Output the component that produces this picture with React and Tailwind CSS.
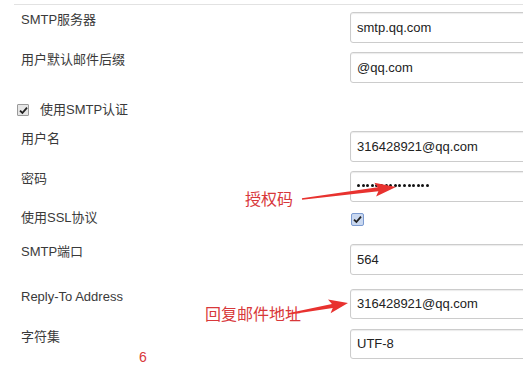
import React from "react";

const Check = ({ blue }) => (
  <span
    className={
      blue
        ? "flex h-[13px] w-[13px] items-center justify-center rounded-[2px] border border-[#7b9ad0] bg-[#c9d8f0]"
        : "flex h-[12px] w-[12px] items-center justify-center rounded-[1px] border border-[#9a9a9a] bg-[#e6e6e6]"
    }
  >
    <svg width="9" height="9" viewBox="0 0 9 9">
      <path d="M1 4.6 L3.4 7 L8 1.6" fill="none" stroke="#222" strokeWidth="1.8" />
    </svg>
  </span>
);

const Field = ({ children, h = "h-[31px]" }) => (
  <div
    className={`flex ${h} w-[200px] shrink-0 items-center rounded-[3px] border border-[#cccccc] bg-white px-[6px] text-[13px] text-[#222] shadow-[inset_0_1px_1px_rgba(0,0,0,0.08)]`}
  >
    {children}
  </div>
);

const Row = ({ label, children, className = "" }) => (
  <div className={`flex items-start ${className}`}>
    <div className="w-[350px] shrink-0 pl-[21px] leading-[16px]">{label}</div>
    {children}
  </div>
);

const dots = Array.from({ length: 16 });

export default function App() {
  return (
    <div className="relative h-[369px] w-[523px] overflow-hidden bg-white font-['Arial','Liberation_Sans','Noto_Sans_CJK_SC',sans-serif] text-[13px] text-[#3a3a3a]">
      <div className="ml-[14px] mt-[4px] border-t border-[#e2e2e2]" />

      <Row label="SMTP服务器" className="mt-[7px]">
        <Field>smtp.qq.com</Field>
      </Row>
      <Row label="用户默认邮件后缀" className="mt-[9px]">
        <Field>@qq.com</Field>
      </Row>

      <div className="mt-[19px] flex h-[16px] items-center pl-[17px]">
        <Check />
        <span className="ml-[11px] leading-[16px]">使用SMTP认证</span>
      </div>

      <Row label="用户名" className="mt-[13px]">
        <Field>316428921@qq.com</Field>
      </Row>
      <Row label="密码" className="mt-[9px]">
        <Field>
          <span className="mt-[-2px] flex gap-[1.6px]">
            {dots.map((_, i) => (
              <span key={i} className="h-[3px] w-[3px] rounded-full bg-[#111]" />
            ))}
          </span>
        </Field>
      </Row>
      <Row label="使用SSL协议" className="mt-[8px] h-[18px]">
        <div className="ml-[1px] mt-[3px]">
          <Check blue />
        </div>
      </Row>
      <Row label="SMTP端口" className="mt-[16px]">
        <Field>564</Field>
      </Row>
      <Row label="Reply-To Address" className="mt-[14px]">
        <Field h="h-[30px]">316428921@qq.com</Field>
      </Row>
      <Row label="字符集" className="mt-[10px]">
        <Field h="h-[30px]">UTF-8</Field>
      </Row>

      <span className="absolute left-[245px] top-[189px] font-['Noto_Sans_CJK_SC',sans-serif] text-[16px] leading-[18px] text-[#d8383a]">
        授权码
      </span>
      <span className="absolute left-[205px] top-[304px] font-['Noto_Sans_CJK_SC',sans-serif] text-[16px] leading-[18px] text-[#d8383a]">
        回复邮件地址
      </span>
      <span className="absolute left-[139px] top-[349px] font-['Arial','Liberation_Sans',sans-serif] text-[14px] leading-[16px] text-[#d8383a]">
        6
      </span>

      <svg className="pointer-events-none absolute left-0 top-0" width="523" height="369" viewBox="0 0 523 369">
        <polygon
          fill="#e8322f"
          points="301.9,198.2 377.8,187.3 374.3,182.8 396,187 376.1,196.6 378.4,191.3 302.1,199.8"
        />
        <polygon
          fill="#e8322f"
          points="287.9,313.3 331.9,303.9 328.0,299.5 348,303 330.6,313.3 332.7,307.9 288.1,314.7"
        />
      </svg>
    </div>
  );
}
